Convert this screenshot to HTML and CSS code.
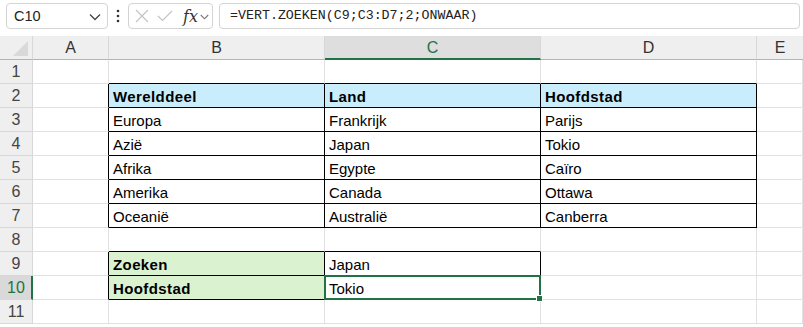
FILE: index.html
```html
<!DOCTYPE html>
<html lang="nl">
<head>
<meta charset="utf-8">
<title>VERT.ZOEKEN</title>
<link rel="stylesheet" href="styles.css">
</head>
<body>
<div class="toolbar">
  <div class="namebox">
    <span class="ref">C10</span>
    <svg class="chev" width="12" height="8" viewBox="0 0 12 8"><path d="M1 1.5 L6 6.5 L11 1.5" fill="none" stroke="#444" stroke-width="1.3"/></svg>
  </div>
  <div class="kebab">
    <svg width="4" height="14" viewBox="0 0 4 14"><circle cx="2" cy="2" r="1.3" fill="#333"/><circle cx="2" cy="7" r="1.3" fill="#333"/><circle cx="2" cy="12" r="1.3" fill="#333"/></svg>
  </div>
  <div class="fxbox">
    <svg class="ico" width="14" height="14" viewBox="0 0 14 14"><path d="M1 1 L13 13 M13 1 L1 13" stroke="#c4c4c4" stroke-width="1.2" fill="none"/></svg>
    <svg class="ico" width="16" height="12" viewBox="0 0 16 12"><path d="M1 6 L5.5 10.5 L15 1" stroke="#c4c4c4" stroke-width="1.2" fill="none"/></svg>
    <span class="fx">fx</span>
    <svg class="chev2" width="9" height="6" viewBox="0 0 9 6"><path d="M0.8 1 L4.5 4.8 L8.2 1" fill="none" stroke="#777" stroke-width="1.1"/></svg>
  </div>
  <div class="formula">=VERT.ZOEKEN(C9;C3:D7;2;ONWAAR)</div>
</div>

<div class="sheet">
  <div class="corner"></div>
  <div class="ch">A</div>
  <div class="ch">B</div>
  <div class="ch sel">C</div>
  <div class="ch">D</div>
  <div class="ch last">E</div>

  <div class="rh">1</div>
  <div class="c"></div><div class="c bb"></div><div class="c bb"></div><div class="c bb"></div><div class="c"></div>

  <div class="rh">2</div>
  <div class="c br"></div><div class="c br bb blue b">Werelddeel</div><div class="c br bb blue b">Land</div><div class="c br bb blue b">Hoofdstad</div><div class="c"></div>

  <div class="rh">3</div>
  <div class="c br"></div><div class="c br bb">Europa</div><div class="c br bb">Frankrijk</div><div class="c br bb">Parijs</div><div class="c"></div>

  <div class="rh">4</div>
  <div class="c br"></div><div class="c br bb">Azië</div><div class="c br bb">Japan</div><div class="c br bb">Tokio</div><div class="c"></div>

  <div class="rh">5</div>
  <div class="c br"></div><div class="c br bb">Afrika</div><div class="c br bb">Egypte</div><div class="c br bb">Caïro</div><div class="c"></div>

  <div class="rh">6</div>
  <div class="c br"></div><div class="c br bb">Amerika</div><div class="c br bb">Canada</div><div class="c br bb">Ottawa</div><div class="c"></div>

  <div class="rh">7</div>
  <div class="c br"></div><div class="c br bb">Oceanië</div><div class="c br bb">Australië</div><div class="c br bb">Canberra</div><div class="c"></div>

  <div class="rh">8</div>
  <div class="c"></div><div class="c bb"></div><div class="c bb"></div><div class="c"></div><div class="c"></div>

  <div class="rh">9</div>
  <div class="c br"></div><div class="c br bb green b">Zoeken</div><div class="c br bb">Japan</div><div class="c"></div><div class="c"></div>

  <div class="rh rsel">10</div>
  <div class="c br"></div><div class="c br bb green b">Hoofdstad</div><div class="c br bb active">Tokio</div><div class="c"></div><div class="c"></div>

  <div class="rh">11</div>
  <div class="c"></div><div class="c"></div><div class="c"></div><div class="c"></div><div class="c"></div>
</div>
</body>
</html>
```

FILE: styles.css
```css
* { box-sizing: border-box; }
html, body {
  margin: 0;
  padding: 0;
  background: #ffffff;
  width: 803px;
  height: 327px;
  overflow: hidden;
  font-family: "Liberation Sans", Arial, sans-serif;
}

.toolbar {
  height: 36px;
  display: flex;
  align-items: flex-start;
  padding-top: 3px;
  background: #ffffff;
}

.namebox {
  margin-left: 6px;
  width: 102px;
  height: 26px;
  border: 1px solid #d4d4d4;
  border-radius: 4px;
  display: flex;
  align-items: center;
  justify-content: space-between;
  padding: 0 6px 0 7px;
}
.ref {
  font-size: 14.5px;
  color: #222;
}
.chev { margin-top: 1px; }

.kebab {
  width: 20px;
  height: 26px;
  display: flex;
  align-items: center;
  justify-content: center;
}

.fxbox {
  width: 85px;
  height: 26px;
  border: 1px solid #d4d4d4;
  border-radius: 4px;
  display: flex;
  align-items: center;
  padding-left: 6px;
  gap: 8px;
}
.fx {
  font-family: "DejaVu Serif", "Liberation Serif", serif;
  font-style: italic;
  font-size: 16px;
  color: #333;
  margin-left: 2px;
  margin-right: -6px;
}
.chev2 { margin-top: 1px; }

.formula {
  margin-left: 6px;
  width: 581px;
  height: 26px;
  border: 1px solid #d4d4d4;
  border-radius: 4px;
  padding-left: 10px;
  font-family: "Liberation Mono", "DejaVu Sans Mono", monospace;
  font-size: 13.3px;
  line-height: 24px;
  color: #222;
}

.sheet {
  display: grid;
  grid-template-columns: 33px 76px 216px 216px 216px 46px;
  grid-template-rows: 24px repeat(11, 24px);
}

.corner {
  background: #efefef;
  border-right: 1px solid #d8d8d8;
  border-bottom: 1px solid #b4b4b4;
  position: relative;
}
.corner::after {
  content: "";
  position: absolute;
  right: 4px;
  bottom: 3px;
  width: 15px;
  height: 15px;
  background: #d9d9d9;
  clip-path: polygon(100% 0, 100% 100%, 0 100%);
}

.ch {
  background: #efefef;
  border-right: 1px solid #d8d8d8;
  border-bottom: 1px solid #b4b4b4;
  text-align: center;
  font-size: 16px;
  line-height: 24px;
  color: #333;
}
.ch.sel {
  background: #dedede;
  border-bottom: 2px solid #217346;
  color: #217346;
  line-height: 23px;
}
.ch.last { border-right: none; }

.rh {
  background: #efefef;
  border-right: 1px solid #d8d8d8;
  border-bottom: 1px solid #d8d8d8;
  text-align: center;
  font-size: 16px;
  line-height: 24px;
  color: #444;
}
.rh.rsel {
  background: #d9d9d9;
  border-right: 2px solid #217346;
  color: #217346;
  padding-left: 1px;
}

.c {
  border-right: 1px solid #e1e1e1;
  border-bottom: 1px solid #e1e1e1;
  padding: 2px 4px 0;
  font-size: 15px;
  line-height: 21px;
  color: #000;
  white-space: nowrap;
  overflow: visible;
}
.c.br { border-right-color: #000; }
.c.bb { border-bottom-color: #000; }
.blue { background: #caedfb; }
.green { background: #daf2d0; }
.b { font-weight: bold; letter-spacing: 0.4px; }

.active { position: relative; }
.active::after {
  content: "";
  position: absolute;
  left: -1px;
  top: -1px;
  right: -1px;
  bottom: -1px;
  border: 2px solid #217346;
}
.active::before {
  content: "";
  position: absolute;
  right: -3px;
  bottom: -3px;
  width: 5px;
  height: 5px;
  background: #217346;
  border: 1px solid #fff;
  z-index: 2;
}
```
